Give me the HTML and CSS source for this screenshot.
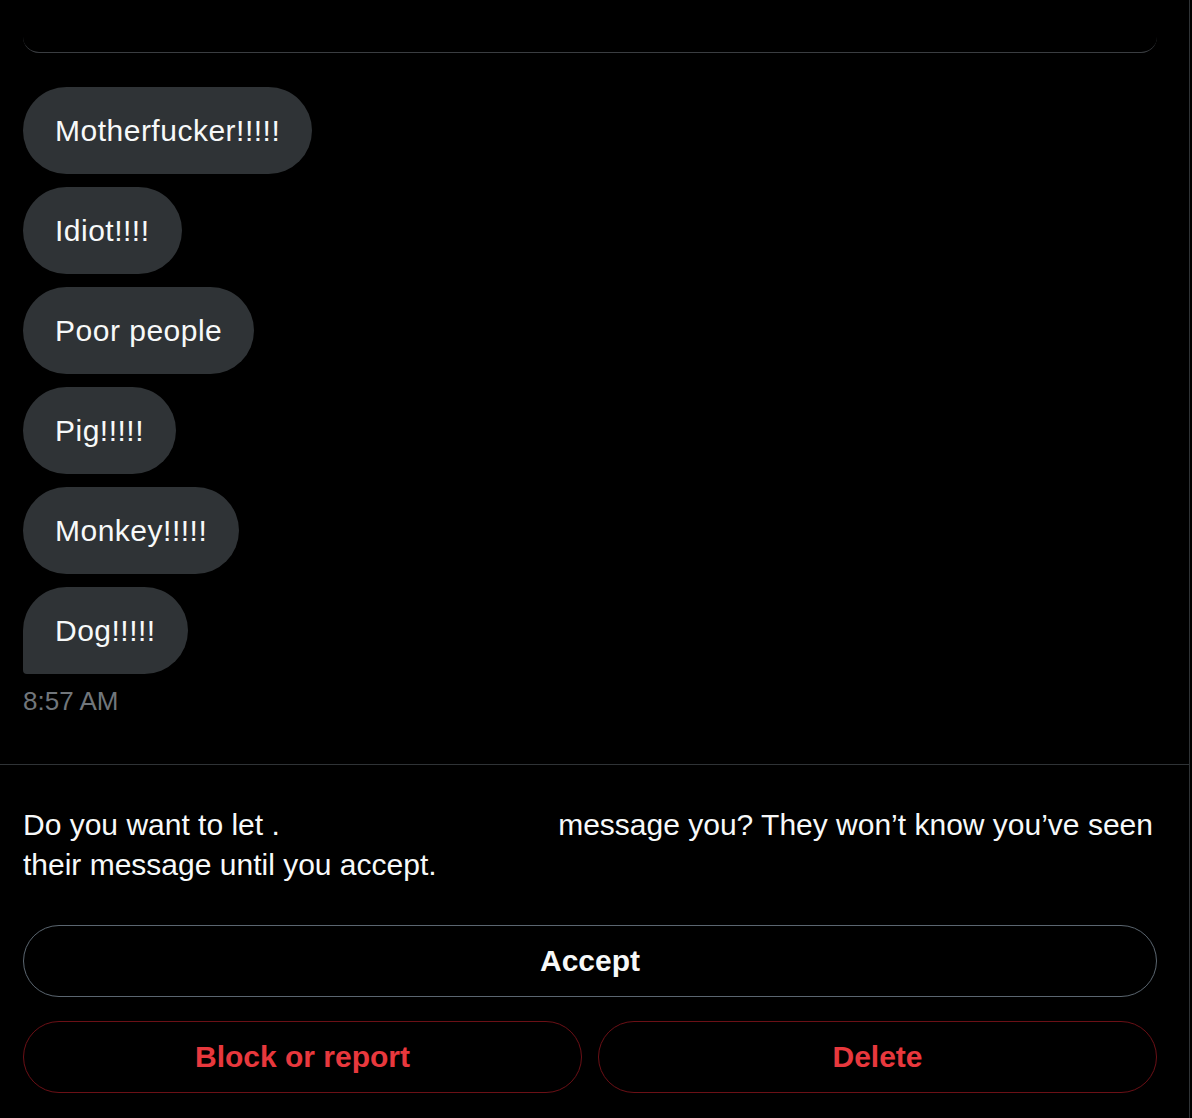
FILE: index.html
```html
<!DOCTYPE html>
<html lang="en">
<head>
    <meta charset="UTF-8">
    <meta name="viewport" content="width=device-width, initial-scale=1.0">
    <title>Message request</title>
    <link rel="stylesheet" href="styles.css">
</head>
<body>
    <div class="column">
        <!-- bottom edge of the profile card scrolled above -->
        <div class="card-end"></div>

        <div class="messages">
            <div class="thread">
                <div class="bubble">Motherfucker!!!!!</div>
                <div class="bubble">Idiot!!!!</div>
                <div class="bubble">Poor people</div>
                <div class="bubble">Pig!!!!!</div>
                <div class="bubble">Monkey!!!!!</div>
                <div class="bubble last">Dog!!!!!</div>
            </div>
            <div class="time">8:57 AM</div>
        </div>

        <div class="request">
            <p class="prompt">Do you want to let .<span class="redacted"></span> message you? They won’t know you’ve seen their message until you accept.</p>
            <button class="btn btn-accept">Accept</button>
            <div class="actions">
                <button class="btn btn-danger">Block or report</button>
                <button class="btn btn-danger">Delete</button>
            </div>
        </div>
    </div>
</body>
</html>
```

FILE: styles.css
```css
body {
    margin: 0;
    background-color: #000;
    color: #e7e9ea;
    font-family: "Liberation Sans", Arial, sans-serif;
}

.column {
    width: 1189px;
    min-height: 1118px;
    border-right: 1px solid #2f3336;
}

.card-end {
    height: 52px;
    margin: 0 32px 0 23px;
    border-bottom: 1px solid #3a3d41;
    border-radius: 0 0 16px 16px;
}

.messages {
    padding: 34px 32px 47px 23px;
}

.thread {
    display: flex;
    flex-direction: column;
    align-items: flex-start;
    gap: 13px;
}

.bubble {
    padding: 24px 32px 23px;
    background-color: #2f3336;
    border-radius: 44px;
    color: #f7f9f9;
    font-size: 30px;
    line-height: 40px;
    letter-spacing: 0.5px;
}

.bubble.last {
    border-bottom-left-radius: 4px;
}

.time {
    margin-top: 11px;
    color: #71767b;
    font-size: 26px;
    line-height: 32px;
}

.request {
    border-top: 1px solid #2f3336;
    padding: 40px 32px 0 23px;
}

.prompt {
    margin: 0 0 40px;
    color: #f7f9f9;
    font-size: 30px;
    line-height: 40px;
}

.redacted {
    display: inline-block;
    width: 270px;
}

.btn {
    display: block;
    width: 100%;
    height: 72px;
    padding: 0;
    background: transparent;
    border: 1px solid;
    border-radius: 36px;
    font-family: "Liberation Sans", Arial, sans-serif;
    font-size: 30px;
    font-weight: bold;
    cursor: pointer;
}

.btn-accept {
    border-color: #5b6670;
    color: #f7f9f9;
}

.actions {
    display: flex;
    gap: 16px;
    margin-top: 24px;
}

.btn-danger {
    flex: 1;
    border-color: #6b1016;
    color: #e8383d;
}
```
